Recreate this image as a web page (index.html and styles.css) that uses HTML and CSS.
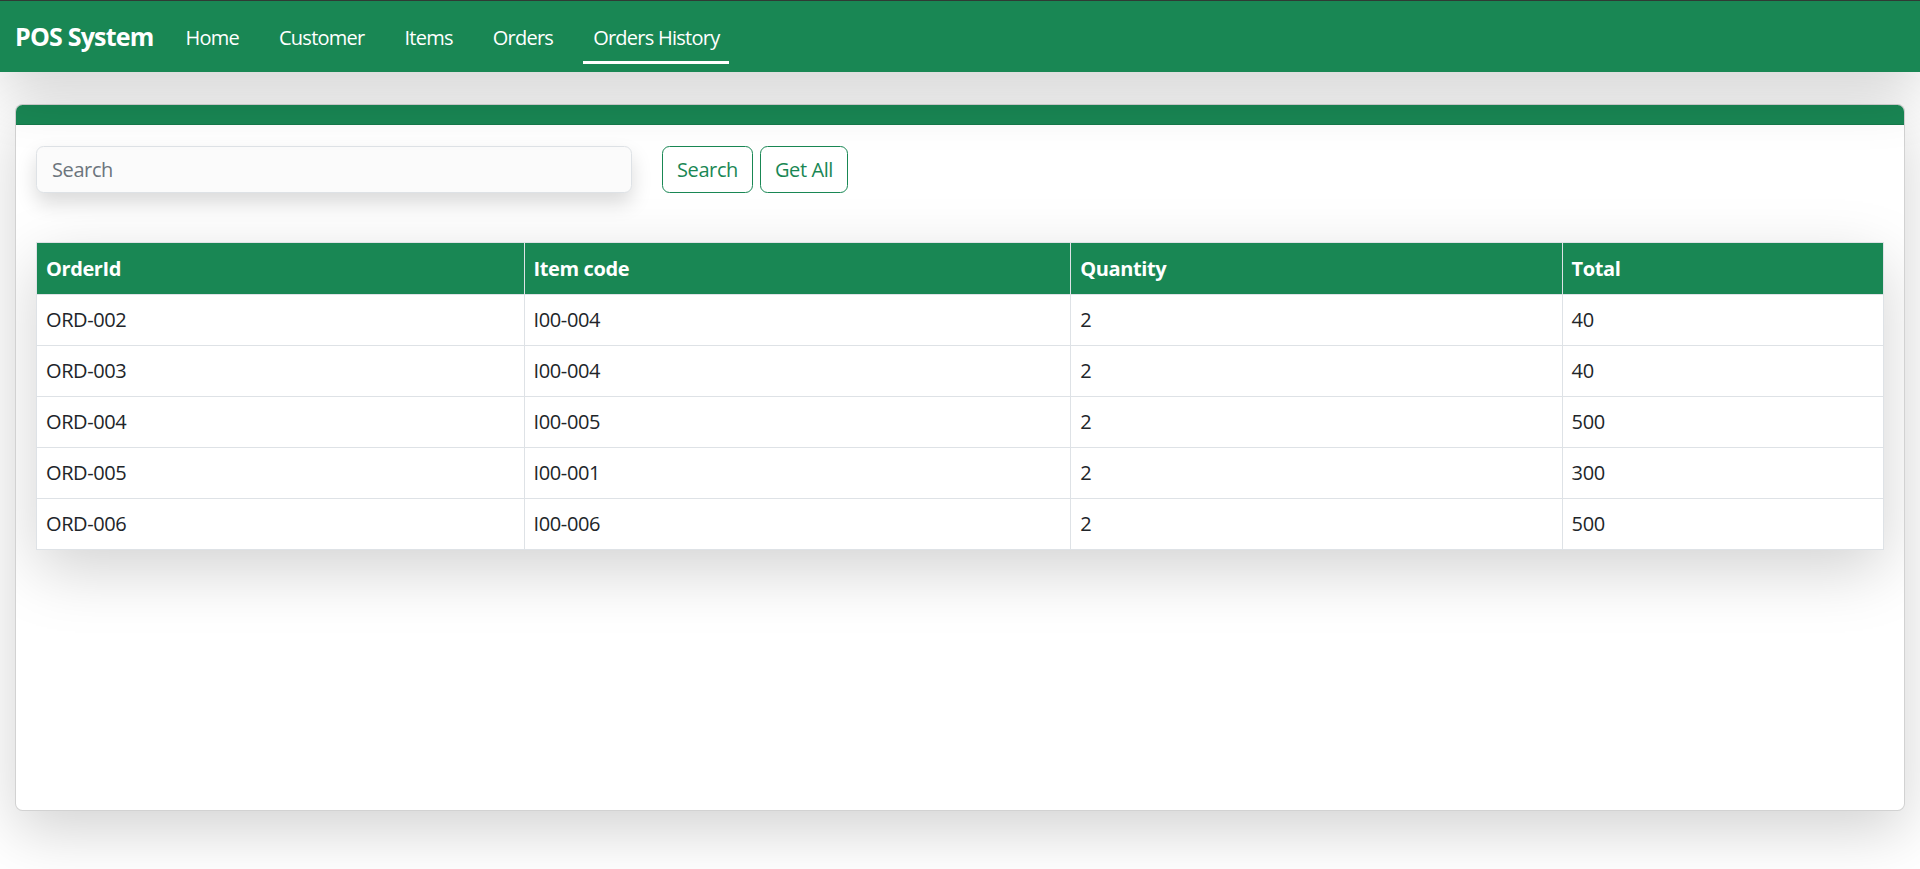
FILE: index.html
```html
<!DOCTYPE html>
<html lang="en">
<head>
<meta charset="utf-8">
<title>POS System - Orders History</title>
<link rel="stylesheet" href="styles.css">
</head>
<body>
<nav class="navbar">
  <a class="brand" href="#">POS System</a>
  <ul class="nav">
    <li><a class="nav-link" href="#">Home</a></li>
    <li><a class="nav-link" href="#">Customer</a></li>
    <li><a class="nav-link" href="#">Items</a></li>
    <li><a class="nav-link" href="#">Orders</a></li>
    <li><a class="nav-link active" href="#">Orders History</a></li>
  </ul>
</nav>
<main class="container">
  <section class="card">
    <div class="card-header"></div>
    <div class="card-body">
      <div class="search-row">
        <div class="search-col"><input class="search-input" type="text" placeholder="Search"></div>
        <div class="btn-col">
          <button class="btn-outline" type="button">Search</button>
          <button class="btn-outline" type="button">Get All</button>
        </div>
      </div>
      <table class="orders">
        <thead>
          <tr>
            <th class="col-order">OrderId</th>
            <th class="col-item">Item code</th>
            <th class="col-qty">Quantity</th>
            <th class="col-total">Total</th>
          </tr>
        </thead>
        <tbody>
          <tr><td>ORD-002</td><td>I00-004</td><td>2</td><td>40</td></tr>
          <tr><td>ORD-003</td><td>I00-004</td><td>2</td><td>40</td></tr>
          <tr><td>ORD-004</td><td>I00-005</td><td>2</td><td>500</td></tr>
          <tr><td>ORD-005</td><td>I00-001</td><td>2</td><td>300</td></tr>
          <tr><td>ORD-006</td><td>I00-006</td><td>2</td><td>500</td></tr>
        </tbody>
      </table>
    </div>
  </section>
</main>
</body>
</html>
```
FILE: styles.css
```css
* { box-sizing: border-box; }

html, body {
  margin: 0;
  padding: 0;
}

body {
  font-family: "Open Sans", "Noto Sans", "Liberation Sans", sans-serif;
  font-size: 20px;
  line-height: 1.5;
  color: #212529;
  background: #ffffff;
  min-height: 869px;
  overflow: hidden;
}

.navbar {
  display: flex;
  align-items: center;
  height: 72px;
  padding: 0 15px;
  background: #198754;
  border-top: 1px solid #2f3a34;
  box-shadow: 0 20px 60px rgba(0, 0, 0, 0.175);
  position: relative;
  z-index: 2;
}

.brand {
  color: #fff;
  font-size: 25px;
  font-weight: 700;
  text-decoration: none;
  margin-right: 22px;
  letter-spacing: -0.8px;
}

.nav {
  display: flex;
  gap: 20px;
  list-style: none;
  margin: 0;
  padding: 0;
  align-items: center;
}

.nav-link {
  display: block;
  color: #fff;
  text-decoration: none;
  padding: 10px 10px 8px;
  border-bottom: 3px solid transparent;
  letter-spacing: -0.75px;
  margin-top: 3px;
}

.nav-link.active {
  border-bottom-color: #fff;
}

.container {
  padding: 32px 15px 0;
}

.card {
  position: relative;
  height: 707px;
  background: #fff;
  border: 1px solid rgba(0, 0, 0, 0.175);
  border-radius: 7.5px;
  box-shadow: 0 20px 60px rgba(0, 0, 0, 0.175);
  overflow: hidden;
}

.card-header {
  height: 20px;
  background: #198754;
  border-bottom: 1px solid rgba(0, 0, 0, 0.1);
}

.card-body {
  padding: 21px 20px 20px;
}

.search-row {
  display: grid;
  grid-template-columns: 1fr 1fr 1fr;
  column-gap: 30px;
  margin-bottom: 49px;
}

.search-input {
  width: 100%;
  height: 47px;
  padding: 7.5px 15px;
  font-family: inherit;
  font-size: 20px;
  color: #212529;
  background: #fbfbfb;
  border: 1px solid #dee2e6;
  border-radius: 7.5px;
  box-shadow: 0 10px 20px rgba(0, 0, 0, 0.15);
  outline: none;
  letter-spacing: -0.4px;
}

.search-input::placeholder {
  color: #6c757d;
}

.btn-col {
  display: flex;
  gap: 7px;
}

.btn-outline {
  height: 47px;
  padding: 0 14px;
  font-family: inherit;
  font-size: 20px;
  color: #198754;
  background: transparent;
  border: 1px solid #198754;
  border-radius: 7.5px;
  letter-spacing: -0.4px;
}

.orders {
  width: 100%;
  border-collapse: collapse;
  box-shadow: 0 20px 60px rgba(0, 0, 0, 0.175);
  letter-spacing: -0.4px;
}

.orders th,
.orders td {
  border: 1px solid #dee2e6;
  padding: 10px 9px;
  text-align: left;
  line-height: 30px;
}

.orders th {
  background: #198754;
  color: #fff;
  font-weight: 700;
  padding-top: 11px;
}

.col-order { width: 26.4%; }
.col-item { width: 29.6%; }
.col-qty { width: 26.6%; }
```
